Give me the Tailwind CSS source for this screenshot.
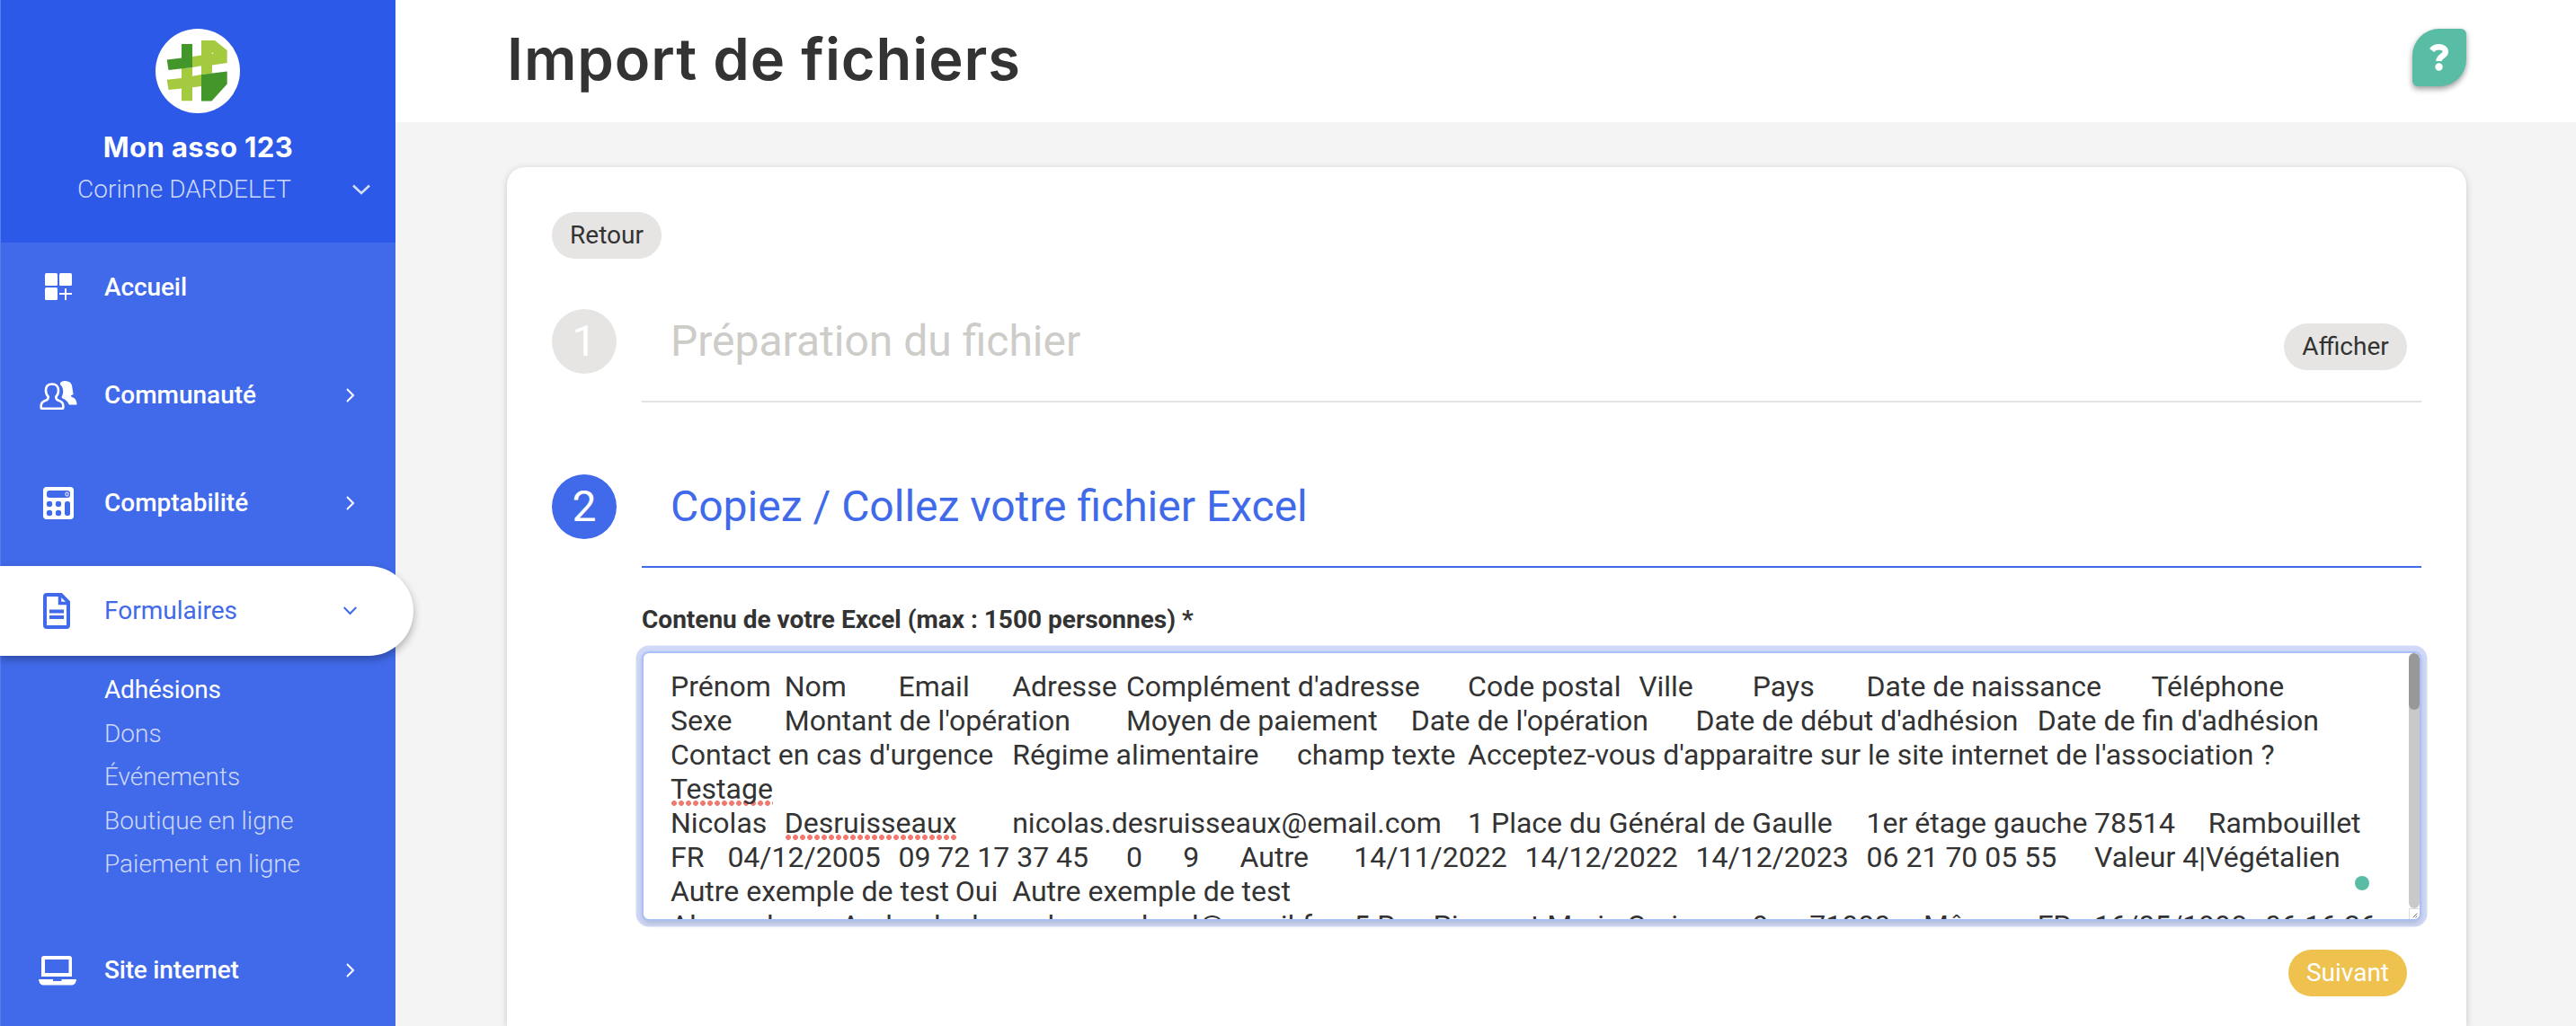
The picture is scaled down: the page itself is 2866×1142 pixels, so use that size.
<!DOCTYPE html>
<html lang="fr">
<head>
<meta charset="utf-8">
<title>Import de fichiers</title>
<script src="https://cdn.jsdelivr.net/npm/@tailwindcss/browser@4"></script>
</head>
<body class="flex h-[1142px] w-[2866px] overflow-hidden bg-[#f4f4f4] font-[Roboto,sans-serif] text-[32px] text-[#333]">

<aside class="relative z-10 flex h-full w-[440px] shrink-0 flex-col border-l border-[#5a7dee] bg-[#416aea] text-white">
  <div class="flex h-[270px] shrink-0 flex-col items-center bg-[#2c59e7] pt-8">
    <svg class="-ml-px h-[94px] w-[94px]" viewBox="0 0 94 94">
      <circle cx="47" cy="47" r="47" fill="#fff"/>
      <g fill="#a4cb3f">
        <path d="M41 31 51 29.500V13H66L79.700 24V38L63 40.500V49.500L51 51V41.300L41 43z"/>
        <path d="M29 44 41 43V52.700L51 51V64L41 65.300V80.300H29V66.500L14.500 68 12.700 56.700 29 55z"/>
      </g>
      <path d="M29 17H41V43L14.500 46 12.700 34.500 29 32.500zM51 51 79.700 47.500V61.500L62.500 80.500H51z" fill="#43962a"/>
      <circle cx="63.500" cy="27.300" r=".8" fill="#fff"/>
    </svg>
    <div class="mt-4 font-[Inter,sans-serif] text-[31px] leading-[44px] font-bold tracking-[0.400px]">Mon asso 123</div>
    <div class="flex w-full items-center pt-[3px] pl-[85px]">
      <span class="w-[306px] text-[28px] leading-[44px] font-light tracking-[0.060px] text-[#cdd8fa]">Corinne DARDELET</span>
      <svg class="h-3 w-5" viewBox="0 0 20 12" fill="none" stroke="#d3dcfa" stroke-width="2.600"><path d="M1 1.500 10 10 19 1.500"/></svg>
    </div>
  </div>

  <nav class="flex flex-col text-[28px] font-medium">
    <a class="flex h-[98px] items-center">
      <svg class="ml-[49px] h-[30px] w-[30px]" viewBox="0 0 30 30" fill="#fff"><rect width="14" height="14" rx="1.500"/><rect x="16" width="14" height="14" rx="1.500"/><rect y="16" width="14" height="14" rx="1.500"/><path d="M22 17h2v5h6v2h-6v6h-2v-6h-6v-2h6z"/></svg>
      <span class="ml-9 pt-[2px] tracking-[-0.100px]">Accueil</span>
    </a>
    <a class="mt-3 flex h-[120px] items-center">
      <svg class="ml-[43px] h-[34px] w-[42px]" viewBox="0 0 42 34"><path d="M14 4.500c-4.500 0-7 2.700-7 7 0 3 1 5.500 2.800 7.200 0 2.500-.8 3.300-3 4C3 24 1.700 25.500 1.700 28.500V31q0 .8.800.8h23q.8 0 .8-.8v-2.500c0-3-1.300-4.500-5.100-5.800-2.200-.7-3-1.500-3-4C20 17 21 14.500 21 11.500c0-4.300-2.500-7-7-7z" fill="none" stroke="#fff" stroke-width="2.600"/><path d="M23 3C25 1 27.500.5 30 1.300c3 .5 5 1.500 6 4.700l1.500 9.500q.2 1-1.500 1.200c-1.500.3-1.500 1.300 0 2.300 3.500 1 5.500 3.500 5.500 8.500H33C30.500 23 28 21 25.500 20.500l-1-1.500C27 15 27 8.500 23 5z" fill="#fff"/></svg>
      <span class="ml-[30px] w-[269px]">Communauté</span>
      <svg class="h-4 w-[10px]" viewBox="0 0 10 16" fill="none" stroke="#fff" stroke-width="2"><path d="M1 1 8 8 1 15"/></svg>
    </a>
    <a class="flex h-[120px] items-center">
      <svg class="ml-[47px] h-9 w-[34px]" viewBox="0 0 34 36"><rect width="34" height="36" rx="4" fill="#fff"/><g fill="#416aea"><rect x="4" y="4" width="26" height="8" rx="3"/><circle cx="7" cy="19" r="3.200"/><circle cx="17" cy="19" r="3.200"/><circle cx="7" cy="29" r="3.200"/><circle cx="17" cy="29" r="3.200"/><rect x="24" y="16" width="6" height="16" rx="2.500"/></g><rect x="25" y="6" width="3" height="4" rx="1" fill="none" stroke="#fff"/></svg>
      <span class="ml-[34px] w-[269px]">Comptabilité</span>
      <svg class="h-4 w-[10px]" viewBox="0 0 10 16" fill="none" stroke="#fff" stroke-width="2"><path d="M1 1 8 8 1 15"/></svg>
    </a>
    <a class="mt-[10px] -ml-px flex h-[100px] w-[460px] items-center rounded-r-full bg-white font-normal text-[#416aea] shadow-[0_4px_10px_rgba(0,0,0,0.300)]">
      <svg class="ml-12 h-10 w-[30px]" viewBox="0 0 30 40" fill="none" stroke="#416aea" stroke-width="4"><path d="M4 2H20L28 10V36Q28 38 26 38H4Q2 38 2 36V4Q2 2 4 2z"/><path d="M18.500 2V11.500H28" stroke-width="3.500"/><path d="M7 20.500H23M7 27H23" stroke-width="3.800"/></svg>
      <span class="ml-[38px] w-[266px]">Formulaires</span>
      <svg class="h-[10px] w-[15px]" viewBox="0 0 15 10" fill="none" stroke="#416aea" stroke-width="2"><path d="M.7 1 7.500 8 14.300 1"/></svg>
    </a>
    <div class="flex flex-col pt-[14px] pl-[115px] text-[28px] leading-[48.500px] font-light text-[#cdd8fa]">
      <span class="font-normal tracking-[-0.200px] text-white">Adhésions</span>
      <span>Dons</span>
      <span>Événements</span>
      <span>Boutique en ligne</span>
      <span>Paiement en ligne</span>
    </div>
    <a class="mt-[33px] flex h-[120px] items-center">
      <svg class="ml-[42px] h-[34px] w-[42px]" viewBox="0 0 42 34" fill="#fff"><path fill-rule="evenodd" d="M6 1H34Q37 1 37 4V24H3V4Q3 1 6 1zM7 5V20H33.500V5z"/><path d="M0 27H16V29H25.500V27H42C41.500 31.500 39.500 33.500 36.500 33.500H5.500C2.500 33.500.5 31.500 0 27z"/></svg>
      <span class="ml-[31px] w-[269px] tracking-[-0.200px]">Site internet</span>
      <svg class="h-4 w-[10px]" viewBox="0 0 10 16" fill="none" stroke="#fff" stroke-width="2"><path d="M1 1 8 8 1 15"/></svg>
    </a>
  </nav>
</aside>

<main class="flex min-w-0 flex-1 flex-col">
  <header class="flex h-[136px] shrink-0 items-start justify-between bg-white pt-8 pr-[122px] pl-[124px]">
    <h1 class="-mt-[3px] font-[Inter,sans-serif] text-[65px] leading-[74px] font-semibold tracking-[0.900px]">Import de fichiers</h1>
    <div class="flex h-16 w-[60px] items-center justify-center rounded-[30px_6px_30px_6px] bg-[#59bda5] shadow-[0_3px_6px_rgba(0,0,0,0.400)]">
      <svg class="h-8 w-[22px]" viewBox="0 0 22 32" fill="none"><path d="M2.500 8C4.500 5.500 7 4.300 10.500 4.300c4 0 7.200 1.700 7.200 5.200 0 5-7.200 5-7.200 10.500" stroke="#fff" stroke-width="6.500"/><circle cx="10.500" cy="26.500" r="4.200" fill="#fff"/></svg>
    </div>
  </header>

  <section class="mt-[50px] mr-[122px] ml-[124px] flex min-h-0 flex-1 flex-col rounded-t-[20px] bg-white px-[50px] pt-[50px] shadow-[0_2px_8px_rgba(0,0,0,0.180)]">
    <button class="flex h-[52px] w-[122px] shrink-0 items-center justify-center rounded-full bg-[#e6e5e3] text-[28px]">Retour</button>

    <div class="mt-14 flex items-start">
      <div class="flex h-[72px] w-[72px] items-center justify-center rounded-full bg-[#e6e5e3] text-[48px] text-white">1</div>
      <div class="ml-7 flex h-[104px] flex-1 items-start justify-between border-b-2 border-[#e3e3e3] pr-4 pl-8">
        <h2 class="text-[48px] leading-[72px] text-[#cdccc8]">Préparation du fichier</h2>
        <button class="mt-4 flex h-[52px] w-[137px] items-center justify-center rounded-full bg-[#e6e5e3] text-[28px]">Afficher</button>
      </div>
    </div>

    <div class="mt-20 flex items-start">
      <div class="flex h-[72px] w-[72px] items-center justify-center rounded-full bg-[#416aea] text-[48px] text-white">2</div>
      <div class="ml-7 h-[104px] flex-1 border-b-2 border-[#416aea] pl-8">
        <h2 class="text-[48px] leading-[72px] text-[#416aea]">Copiez / Collez votre fichier Excel</h2>
      </div>
    </div>

    <div class="ml-[100px] flex flex-col pt-[38px]">
      <label class="text-[28px] leading-10 font-bold">Contenu de votre Excel (max : 1500 personnes) *</label>
      <div class="relative mt-[15px] h-[300px] overflow-hidden rounded-lg border-2 border-[#abbff7] bg-white pt-[18px] pl-[30px] shadow-[0_3px_6px_rgba(0,0,0,0.150),0_0_0_6.500px_#d0daf8]">
        <div class="text-[32px] leading-[38px] whitespace-pre [tab-size:63.36px]">Prénom&#9;Nom&#9;Email&#9;Adresse&#9;Complément d'adresse&#9;Code postal&#9;Ville&#9;Pays&#9;Date de naissance&#9;Téléphone
Sexe&#9;Montant de l'opération&#9;Moyen de paiement&#9;Date de l'opération&#9;Date de début d'adhésion&#9;Date de fin d'adhésion
Contact en cas d'urgence&#9;Régime alimentaire&#9;champ texte&#9;Acceptez-vous d'apparaitre sur le site internet de l'association ?
<span class="bg-[radial-gradient(circle,#ee7a70_2.600px,transparent_3.200px)] bg-[length:8px_6px] bg-bottom-left bg-repeat-x">Testage</span>
Nicolas&#9;<span class="bg-[radial-gradient(circle,#ee7a70_2.600px,transparent_3.200px)] bg-[length:8px_6px] bg-bottom-left bg-repeat-x">Desruisseaux</span>&#9;nicolas.desruisseaux@email.com&#9;1 Place du Général de Gaulle&#9;1er étage gauche&#9;78514&#9;Rambouillet
FR&#9;04/12/2005&#9;09 72 17 37 45&#9;0&#9;9&#9;Autre&#9;14/11/2022&#9;14/12/2022&#9;14/12/2023&#9;06 21 70 05 55&#9;Valeur 4|Végétalien
Autre exemple de test&#9;Oui&#9;Autre exemple de test
Alexandre&#9;Andoudael&#9;rodemanebred@email.fr&#9;5 Rue Pierre et Marie Curie&#9;9&#9;71000&#9;Mâcon&#9;FR&#9;16/05/1998&#9;06 16 26</div>
        <div class="absolute top-0 right-0 flex h-[296px] w-3 flex-col bg-white">
          <div class="h-[284px] rounded-full bg-[#c9c9c9]"><div class="h-[63px] rounded-full bg-[#989898]"></div></div>
          <svg class="h-3 w-3 border-t border-l border-[#ddd]" viewBox="0 0 12 12" stroke="#555"><path d="M4 10 9 5M7 10l2-2"/></svg>
        </div>
        <div class="absolute right-[56px] bottom-8 h-4 w-4 rounded-full bg-[#59bda5]"></div>
      </div>
      <button class="mt-8 mr-4 flex h-[52px] w-[132px] items-center justify-center self-end rounded-full bg-[#efc250] text-[28px] text-white">Suivant</button>
    </div>
  </section>
</main>
</body>
</html>
